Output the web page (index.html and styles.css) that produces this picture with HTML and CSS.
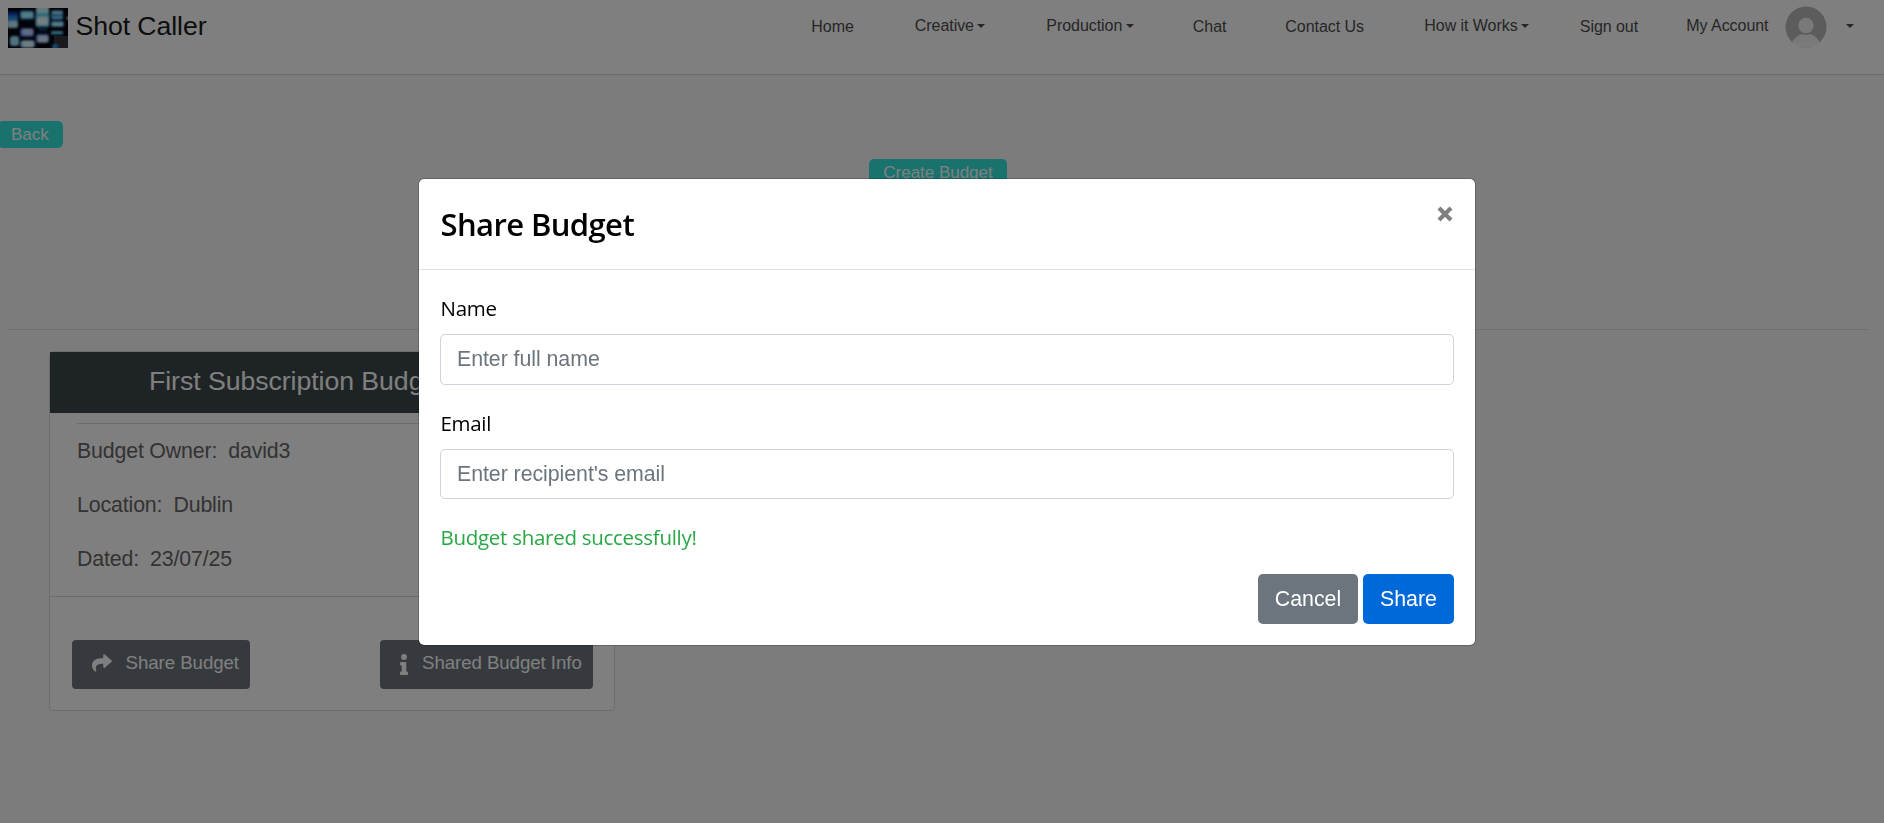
FILE: index.html
```html
<!DOCTYPE html>
<html lang="en">
<head>
<meta charset="utf-8">
<title>Shot Caller</title>
<link rel="stylesheet" href="styles.css">
</head>
<body>
<nav class="navbar">
  <a class="brand">
    <svg class="logo" viewBox="0 0 60 40" width="60" height="40">
      <defs><filter id="glow" x="-20%" y="-20%" width="140%" height="140%"><feGaussianBlur stdDeviation=".8"/></filter></defs>
      <rect width="60" height="40" fill="#04050e"/>
      <path d="M46 28H60V40H46Z" fill="#34343c"/>
      <g filter="url(#glow)">
        <rect x="-2" y="4" width="12" height="6" fill="#0a3fc0"/>
        <rect x="-2" y="8" width="12" height="6" fill="#2b8fe0"/>
        <rect x="-1" y="13" width="11" height="7" rx="2" fill="#b8ecff"/>
        <rect x="2" y="28" width="9" height="10" rx="3" fill="#a0e4ff"/>
        <rect x="12" y="2.500" width="14" height="9" rx="2" fill="#2c9cf0"/>
        <rect x="13" y="4" width="12" height="6" rx="2" fill="#a4f4ff"/>
        <rect x="12" y="20" width="14" height="9" rx="3" fill="#4a70e0"/>
        <rect x="14" y="21" width="11" height="6" rx="2" fill="#c0d8ff"/>
        <rect x="12" y="32" width="15" height="8" rx="3" fill="#4aa8f0"/>
        <rect x="14" y="33" width="12" height="6" rx="2" fill="#e0fcff"/>
        <rect x="28" y="-2" width="13" height="8" rx="2" fill="#c0f8ff"/>
        <rect x="27.500" y="5" width="14" height="14" rx="2" fill="#60d4f8"/>
        <rect x="29" y="9" width="11" height="8" rx="2" fill="#e4ffff"/>
        <rect x="31" y="18" width="8" height="5" fill="#0c3c70"/>
        <rect x="28" y="26" width="13" height="9" rx="3" fill="#7098f8"/>
        <rect x="30" y="28" width="10" height="6" rx="2" fill="#d8ecff"/>
        <rect x="43" y="2" width="12" height="10" rx="2" fill="#1c74c8"/>
        <rect x="44" y="3.500" width="11" height="2.500" rx="1" fill="#a0f4ff"/>
        <rect x="44" y="8" width="11" height="3" rx="1" fill="#6cc8f0"/>
        <rect x="43" y="13" width="13" height="6" rx="2" fill="#38a0e8"/>
        <rect x="44" y="14.500" width="11" height="3.500" rx="1" fill="#b8faff"/>
        <rect x="43" y="23" width="12" height="3.500" rx="1" fill="#60ccf8"/>
        <rect x="44" y="36" width="6" height="5" rx="2" fill="#2890e0"/>
        <circle cx="60" cy="10" r="1.500" fill="#eee"/>
      </g>
    </svg>
    <span class="brand-name">Shot Caller</span>
  </a>
  <ul class="menu">
    <li class="home">Home</li>
    <li class="drop creative">Creative</li>
    <li class="drop production">Production</li>
    <li class="chat">Chat</li>
    <li class="contact">Contact Us</li>
    <li class="drop how">How it Works</li>
    <li class="signout">Sign out</li>
    <li class="drop account"><span>My Account</span>
      <svg class="avatar" width="42" height="42" viewBox="0 0 42 42">
        <defs><clipPath id="round"><circle cx="21" cy="21" r="20.5"/></clipPath></defs>
        <g clip-path="url(#round)">
          <rect width="42" height="42" fill="#b8b8b8"/>
          <path d="M5 42C7 33 13 27.500 21 27.500S35 33 37 42Z" fill="#f3f3f3"/>
          <circle cx="21" cy="20" r="9" fill="#b8b8b8"/>
          <circle cx="21" cy="19.500" r="7.700" fill="#f3f3f3"/>
          <path d="M0 37H42V42H0Z" fill="#f6f6f6"/>
        </g>
      </svg>
    </li>
  </ul>
</nav>

<main class="page">
  <button class="pill back">Back</button>
  <div class="create-row"><button class="pill create">Create Budget</button></div>
  <hr class="divider">
  <section class="card">
    <h2 class="card-title">First Subscription Budget</h2>
    <div class="card-body">
      <hr class="card-rule">
      <p>Budget Owner:&nbsp; david3</p>
      <p>Location:&nbsp; Dublin</p>
      <p>Dated:&nbsp; 23/07/25</p>
    </div>
    <div class="card-footer">
      <button class="action">
        <svg class="icon-share" width="20" height="20" viewBox="0 0 512 512"><path fill="#fff" d="M503.7 189.8L327.7 37.9C312.300 24.500 288 35.300 288 56V136C127.400 137.800 0 170 0 322.300C0 383.800 39.600 444.700 83.300 476.500C97 486.500 116.400 474 111.400 457.900C66.100 312.900 132.900 274.400 288 272.100V360C288 380.700 312.300 391.500 327.700 378.100L503.700 226.100C514.800 216.600 514.800 199.400 503.700 189.800Z"/></svg>
        <span>Share Budget</span>
      </button>
      <button class="action info">
        <svg class="icon-info" width="8" height="21" viewBox="0 0 192 512"><path fill="#fff" d="M20 424.200H40V279.800H20C9 279.800 0 270.800 0 259.800V212C0 201 9 192 20 192H132C143 192 152 201 152 212V424.200H172C183 424.200 192 433.200 192 444.200V492C192 503 183 512 172 512H20C9 512 0 503 0 492V444.200C0 433.200 9 424.200 20 424.200ZM96 0A72 72 0 1 0 96 144A72 72 0 1 0 96 0Z"/></svg>
        <span>Shared Budget Info</span>
      </button>
    </div>
  </section>
</main>

<div class="backdrop">
  <div class="modal" role="dialog">
    <header class="modal-header">
      <h1 class="modal-title">Share Budget</h1>
      <svg class="close" width="16" height="16" viewBox="0 0 16 16"><path d="M2 2L14 14M14 2L2 14" stroke="#7f7f7f" stroke-width="4.200" fill="none"/></svg>
    </header>
    <form class="modal-body">
      <label class="label" for="name">Name</label>
      <input class="field" id="name" type="text" placeholder="Enter full name">
      <label class="label second" for="email">Email</label>
      <input class="field" id="email" type="text" placeholder="Enter recipient's email">
      <p class="success">Budget shared successfully!</p>
      <div class="buttons">
        <button type="button" class="btn cancel">Cancel</button>
        <button type="button" class="btn share">Share</button>
      </div>
    </form>
  </div>
</div>
</body>
</html>
```
FILE: styles.css
```css
* { box-sizing: border-box; }
html, body { height: 100%; }
body {
  margin: 0;
  overflow: hidden;
  background: #f9f9f9;
  font-family: "Liberation Sans", Arial, sans-serif;
  color: #212529;
}
button { font-family: inherit; border: 0; margin: 0; }

/* Navigation */
.navbar {
  display: flex;
  justify-content: space-between;
  height: 75px;
  padding: 0 30px 0 8px;
  background: #fff;
  border-bottom: 1px solid #dadada;
}
.brand { display: flex; padding-top: 8px; gap: 7.500px; }
.brand-name { font-size: 26.670px; line-height: 36px; letter-spacing: -.08px; color: #1a1a1a; white-space: nowrap; }
.menu {
  display: flex;
  list-style: none;
  margin: 0;
  padding: 16px 0 0;
  font-size: 16px;
  line-height: 20px;
  color: #4d4d4d;
  white-space: nowrap;
}
.menu li { display: flex; height: 20px; padding-top: 1px; letter-spacing: -.05px; }
.menu .drop { padding-top: 0; }
.drop::after {
  content: "";
  margin: 8px 0 0 3.500px;
  height: 0;
  border: 4.500px solid transparent;
  border-top-color: #4d4d4d;
  border-bottom: 0;
}
.home { width: 103.500px; }
.creative { width: 131.500px; }
.production { width: 146.500px; }
.chat { width: 92.500px; }
.contact { width: 139px; }
.how { width: 155.500px; }
.signout { width: 106.500px; }
.avatar { margin: -10px 0 0 16.500px; flex: none; }
.account::after { margin-left: 19px; }

/* Page */
.page { padding-top: 46px; }
.pill {
  display: block;
  height: 27px;
  padding: 0;
  border-radius: 5px;
  background: #35e5dc;
  color: #fff;
  font-size: 17.070px;
  line-height: 27px;
  letter-spacing: -.05px;
}
.back { width: 65px; margin-left: -2px; padding-right: 1.500px; }
.create-row { padding: 11px 0 0 869px; }
.create { width: 138px; }
.divider {
  height: 1px;
  margin: 143px 16px 0 7px;
  border: 0;
  background: #e0e0e0;
}
.card {
  width: 566px;
  height: 360px;
  margin: 21px 0 0 49px;
  background: #fff;
  border: 1px solid #dadada;
  border-radius: 5px;
}
.card-title {
  margin: 0;
  height: 61px;
  padding-left: 99px;
  background: #3d474a;
  color: #fff;
  font-size: 26.670px;
  font-weight: 400;
  line-height: 58px;
  letter-spacing: -.05px;
}
.card-body { height: 183px; padding: 10px 27px 0; }
.card-rule { height: 1px; margin: 0; border: 0; background: #dadada; }
.card-body p {
  margin: 0 0 22px;
  color: #666;
  font-size: 21.330px;
  line-height: 32px;
  letter-spacing: -.13px;
  word-spacing: -.300px;
}
.card-body .card-rule + p { margin-top: 11px; }
.card-footer {
  display: flex;
  justify-content: space-between;
  padding: 43px 21px 0 22px;
  border-top: 1px solid #dadada;
}
.action {
  display: flex;
  width: 178px;
  height: 49px;
  padding: 11px 0 0 20px;
  border-radius: 4px;
  background: #6c757d;
  color: #fff;
  font-size: 18.670px;
  line-height: 23px;
  letter-spacing: -.05px;
  white-space: nowrap;
}
.info { width: 213px; letter-spacing: -.06px; }
.icon-share { margin: 2px 13.500px 0 0; }
.icon-info { margin: 3px 14px 0 0; }

/* Modal */
.backdrop {
  position: fixed;
  inset: 0;
  z-index: 10;
  padding-top: 178px;
  background: rgba(0, 0, 0, .5);
}
.modal {
  width: 1058px;
  height: 468px;
  margin-left: 418px;
  background: #fff;
  background-clip: padding-box;
  border: 1px solid rgba(0, 0, 0, .2);
  border-radius: 6px;
  color: #000;
  font-family: "Segoe UI", "Open Sans", "Noto Sans", sans-serif;
}
.modal-header {
  display: flex;
  justify-content: space-between;
  height: 91px;
  padding: 21px 22.500px 0 21.500px;
  border-bottom: 1px solid #dee2e6;
}
.modal-title { margin: 0; font-size: 31px; font-weight: 600; line-height: 48px; letter-spacing: -.6px; }
.close { margin-top: 6px; }
.modal-body { padding: 22px 21px 0; }
.label { display: block; padding-left: .5px; font-size: 20.500px; line-height: 32px; margin-bottom: 10px; letter-spacing: -.3px; }
.field {
  display: block;
  width: 100%;
  height: 51px;
  padding: 0 16px;
  border: 1px solid #ced4da;
  border-radius: 5px;
  background: #fff;
  font: 21.330px "Liberation Sans", Arial, sans-serif;
  letter-spacing: -.05px;
}
.field::placeholder { color: #6c757d; opacity: 1; }
#email { height: 50px; }
.second { margin-top: 22px; }
.success { margin: 22px 0 0; padding-left: .5px; color: #28a745; font-size: 20.500px; line-height: 32px; letter-spacing: -.28px; }
.buttons { display: flex; justify-content: flex-end; gap: 5px; margin-top: 21px; }
.btn {
  height: 50px;
  padding: 0;
  border-radius: 5px;
  color: #fff;
  font: 21.330px "Liberation Sans", Arial, sans-serif;
}
.cancel { width: 100px; background: #6c757d; }
.share { width: 91px; background: #0069d9; }
```
